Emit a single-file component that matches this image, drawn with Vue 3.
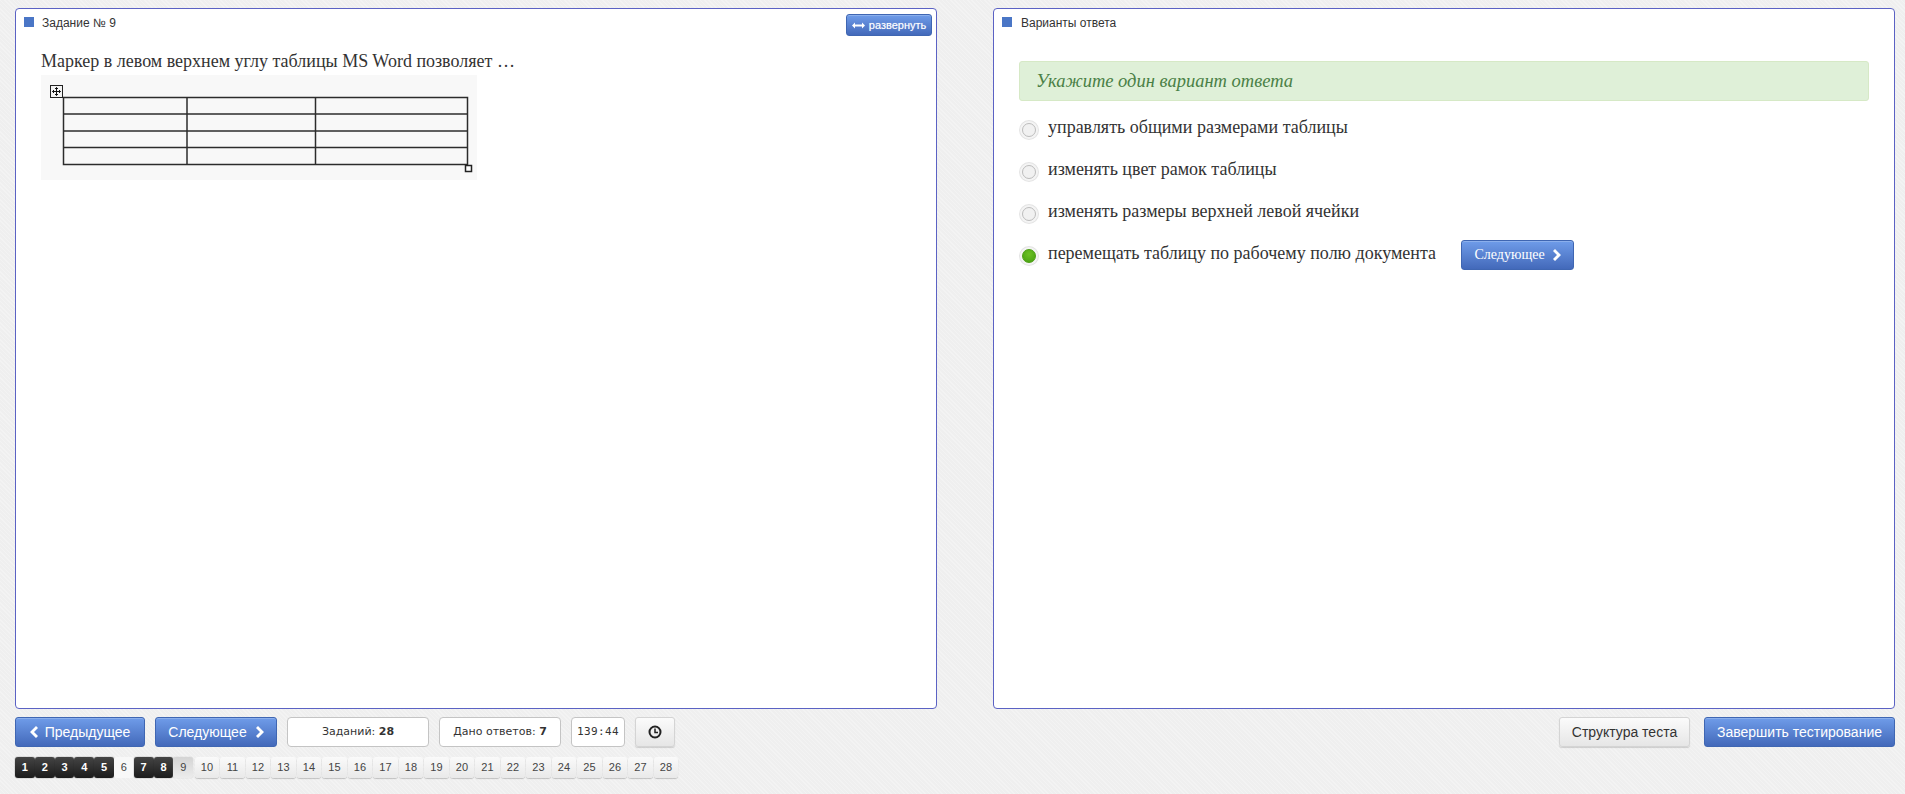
<template>
  <div class="page">
    <div class="panels">
      <section class="panel left">
        <div class="panel-head">
          <span class="sq"></span>
          <span class="panel-title">Задание № 9</span>
          <button class="btn-blue expand">
            <svg width="13" height="7" viewBox="0 0 13 7">
              <path d="M0 3.5 3 .5v2h7v-2l3 3-3 3v-2H3v2z" fill="#fff" />
            </svg>
            развернуть
          </button>
        </div>
        <div class="question">
          <p>Маркер в левом верхнем углу таблицы MS Word позволяет …</p>
          <svg class="word-pic" width="436" height="105" viewBox="0 0 436 105">
            <rect width="436" height="105" fill="#f8f8f8" />
            <g stroke="#2c2c2c" stroke-width="1.5" fill="none">
              <rect x="22.5" y="22.5" width="404" height="67" />
              <path d="M146 22v67M274.5 22v67M22 39h404M22 56h404M22 72.5h404" />
            </g>
            <rect x="9.5" y="10.5" width="12" height="12" fill="#f4f4f4" stroke="#222" />
            <path d="M15.5 12.5v8M11.5 16.5h8M14 14l1.500-1.500 1.500 1.500M14 19l1.500 1.500 1.500-1.500M13 15l-1.500 1.500 1.500 1.500M18 15l1.500 1.500-1.500 1.500" fill="none" stroke="#111" />
            <rect x="424.500" y="90.500" width="6" height="6" fill="#fff" stroke="#222" stroke-width="1.500" />
          </svg>
        </div>
      </section>

      <section class="panel right">
        <div class="panel-head">
          <span class="sq"></span>
          <span class="panel-title">Варианты ответа</span>
        </div>
        <div class="answers">
          <div class="hint">Укажите один вариант ответа</div>
          <div v-for="a in answers" :key="a.text" class="answer">
            <span class="radio" :class="{ on: a.checked }"></span>
            <span class="answer-text">{{ a.text }}</span>
            <button v-if="a.checked" class="btn-blue next-inline">
              Следующее
              <svg class="chev" width="8" height="12" viewBox="0 0 8 12">
                <path d="M2 0 8 6l-6 6-2-2 4-4-4-4z" fill="#fff" />
              </svg>
            </button>
          </div>
        </div>
      </section>
    </div>

    <div class="bottom">
      <div class="bottom-left">
        <button class="btn-blue nav prev">
          <svg class="chev" width="8" height="12" viewBox="0 0 8 12">
            <path d="M6 0 0 6l6 6 2-2-4-4 4-4z" fill="#fff" />
          </svg>
          Предыдущее
        </button>
        <button class="btn-blue nav next">
          Следующее
          <svg class="chev" width="8" height="12" viewBox="0 0 8 12">
            <path d="M2 0 8 6l-6 6-2-2 4-4-4-4z" fill="#fff" />
          </svg>
        </button>
        <div class="stat tasks">Заданий: <b>28</b></div>
        <div class="stat given">Дано ответов: <b>7</b></div>
        <div class="stat timer">139:44</div>
        <button class="btn-gray clock" aria-label="Часы">
          <svg width="14" height="14" viewBox="0 0 14 14">
            <circle cx="7" cy="7" r="5.500" fill="none" stroke="#222" stroke-width="2" />
            <path d="M7 3.500V7.500H10" fill="none" stroke="#222" stroke-width="1.500" />
          </svg>
        </button>
      </div>
      <div class="bottom-right">
        <button class="btn-gray structure">Структура теста</button>
        <button class="btn-blue finish">Завершить тестирование</button>
      </div>
    </div>

    <div class="pager">
      <span
        v-for="n in 28"
        :key="n"
        class="num"
        :class="{ done: done.includes(n), plain: n === 6, current: n === 9, wide: n > 9 }"
      >{{ n }}</span>
    </div>
  </div>
</template>

<script setup>
const answers = [
  { text: "управлять общими размерами таблицы" },
  { text: "изменять цвет рамок таблицы" },
  { text: "изменять размеры верхней левой ячейки" },
  { text: "перемещать таблицу по рабочему полю документа", checked: true },
];
const done = [1, 2, 3, 4, 5, 7, 8];
</script>

<style>
html,
body {
  margin: 0;
  background: #efefef;
}
</style>

<style scoped>
.page {
  box-sizing: border-box;
  width: 1905px;
  height: 794px;
  padding: 8px 10px 0 15px;
  overflow: hidden;
  background-color: #efefef;
  background-image: repeating-linear-gradient(45deg, rgba(255, 255, 255, 0.25) 0 1px, transparent 1px 3px);
  font-family: "Liberation Sans", Arial, sans-serif;
  color: #333;
}
.panels {
  display: flex;
  justify-content: space-between;
}
.panel {
  box-sizing: border-box;
  height: 701px;
  background: #fff;
  border: 1px solid #5b62c4;
  border-radius: 4px;
}
.left {
  width: 922px;
}
.right {
  width: 902px;
}
.panel-head {
  display: flex;
  align-items: flex-start;
  height: 30px;
  padding: 8px 4px 0 8px;
  box-sizing: border-box;
}
.sq {
  width: 10px;
  height: 10px;
  background: #4a76c6;
  flex: none;
}
.panel-title {
  margin-left: 8px;
  padding-top: 1px;
  font-size: 12px;
  line-height: 11px;
}
.right .panel-title {
  margin-left: 9px;
}
.btn-blue {
  border: 1px solid #3f66b2;
  border-radius: 3px;
  background: linear-gradient(#6f9ce9, #4369ba);
  color: #fff;
  font-family: "Liberation Sans", Arial, sans-serif;
  padding: 0;
  box-shadow: inset 0 1px 0 rgba(255, 255, 255, 0.2);
}
.btn-gray {
  border: 1px solid #d4d4d4;
  border-radius: 3px;
  background: linear-gradient(#fbfbfb, #e6e6e6);
  box-shadow: 0 1px 1px rgba(0, 0, 0, 0.15);
  color: #333;
  font-family: "Liberation Sans", Arial, sans-serif;
  padding: 0;
}
.expand {
  box-sizing: border-box;
  width: 86px;
  height: 22px;
  margin: -3px 0 0 auto;
  font-size: 11px;
  text-shadow: 0 0 1px rgba(255, 255, 255, 0.5);
  display: flex;
  align-items: center;
  justify-content: center;
  gap: 4px;
}
.question {
  padding: 10px 0 0 25px;
  font-family: "Liberation Serif", "Times New Roman", serif;
}
.question p {
  margin: 0;
  height: 26px;
  font-size: 18px;
  line-height: 24px;
  color: #333;
}
.word-pic {
  display: block;
}
.answers {
  padding: 22px 25px 0;
  font-family: "Liberation Serif", "Times New Roman", serif;
}
.hint {
  box-sizing: border-box;
  height: 40px;
  padding-left: 16px;
  line-height: 38px;
  background: #dff0d8;
  border: 1px solid #d6e9c6;
  border-radius: 3px;
  color: #4a8046;
  font-size: 18.5px;
  font-style: italic;
}
.answer {
  display: flex;
  align-items: center;
  height: 30px;
  margin-top: 12px;
  font-size: 18px;
}
.hint + .answer {
  margin-top: 13px;
}
.radio {
  box-sizing: border-box;
  width: 14px;
  height: 14px;
  margin: 1px 0 0 3px;
  border: 1px solid #bcbcbc;
  border-radius: 50%;
  background: #f1f1f1;
  box-shadow: 0 0 0 2px #f4f4f4, 0 0 0 3px #e4e4e4;
  flex: none;
}
.radio.on {
  background: radial-gradient(circle at 50% 35%, #6cc024, #46a010);
  border-color: #4a9c12;
}
.answer-text {
  margin-left: 12px;
  margin-top: -3px;
}
.next-inline {
  box-sizing: border-box;
  width: 113px;
  height: 30px;
  margin-left: 25px;
  font-family: "Liberation Serif", "Times New Roman", serif;
  font-size: 14px;
  display: flex;
  align-items: center;
  justify-content: center;
  gap: 8px;
}
.bottom {
  display: flex;
  justify-content: space-between;
  margin-top: 8px;
  height: 30px;
}
.bottom-left,
.bottom-right {
  display: flex;
  gap: 10px;
}
.bottom-right {
  gap: 14px;
}
.nav {
  box-sizing: border-box;
  height: 30px;
  font-size: 14px;
  display: flex;
  align-items: center;
  justify-content: center;
  gap: 7px;
}
.prev {
  width: 130px;
}
.next {
  width: 122px;
  gap: 9px;
}
.stat {
  box-sizing: border-box;
  height: 30px;
  line-height: 28px;
  text-align: center;
  background: #fff;
  border: 1px solid #c4c4c4;
  border-radius: 4px;
  font-family: "DejaVu Sans", Verdana, sans-serif;
  font-size: 11px;
}
.tasks {
  width: 142px;
}
.given {
  width: 122px;
}
.timer {
  width: 54px;
  font-family: "DejaVu Sans Mono", monospace;
  font-size: 11px;
  letter-spacing: 0.4px;
}
.clock {
  box-sizing: border-box;
  width: 40px;
  height: 30px;
  display: flex;
  align-items: center;
  justify-content: center;
}
.structure {
  box-sizing: border-box;
  width: 131px;
  height: 30px;
  font-size: 14px;
}
.finish {
  box-sizing: border-box;
  width: 191px;
  height: 30px;
  font-size: 14px;
}
.pager {
  display: flex;
  margin-top: 10px;
}
.num {
  box-sizing: border-box;
  width: 19.8px;
  height: 21px;
  line-height: 21px;
  text-align: center;
  font-size: 11px;
  border-radius: 3px;
  color: #444;
}
.num.wide {
  width: 24.5px;
  margin-right: 1px;
  background: linear-gradient(#fafafa, #e9e9e9);
  box-shadow: 0 1px 1px rgba(0, 0, 0, 0.2);
}
.num.done {
  background: linear-gradient(#444, #1c1c1c);
  color: #fff;
  font-weight: bold;
  box-shadow: 0 0 1px #222;
}
.num.plain {
  background: #f8f8f8;
}
.num.current {
  margin-right: 1.500px;
  background: linear-gradient(#d4d4d4, #ececec);
  box-shadow: 0 0 1px #aaa;
}
</style>
